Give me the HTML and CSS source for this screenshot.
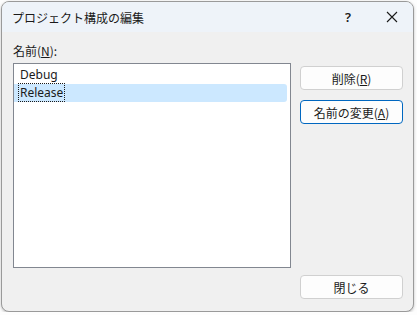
FILE: index.html
```html
<!DOCTYPE html>
<html lang="ja">
<head>
    <meta charset="UTF-8">
    <title>プロジェクト構成の編集</title>
    <link rel="stylesheet" href="styles.css">
</head>
<body>
    <div class="dialog">
        <div class="titlebar">
            <span class="title">プロジェクト構成の編集</span>
            <span class="help">?</span>
            <span class="close">
                <svg width="12" height="12" viewBox="0 0 12 12">
                    <path d="M1 1L11 11M11 1L1 11" stroke="#1a1a1a" stroke-width="1.1" fill="none"/>
                </svg>
            </span>
        </div>
        <div class="content">
            <div class="left">
                <div class="label">名前(<u>N</u>):</div>
                <div class="list">
                    <div class="item">Debug</div>
                    <div class="item selected"><span class="focus">Release</span></div>
                </div>
            </div>
            <div class="buttons">
                <button class="btn">削除(<u>R</u>)</button>
                <button class="btn default">名前の変更(<u>A</u>)</button>
                <div class="spacer"></div>
                <button class="btn">閉じる</button>
            </div>
        </div>
    </div>
</body>
</html>
```

FILE: styles.css
```css
body {
    margin: 0;
    padding: 1px 0 0 1px;
    background: #fdfdfd;
    font-family: "Noto Sans", "Noto Sans CJK JP", sans-serif;
    font-size: 12px;
    color: #1a1a1a;
}

.dialog {
    width: 411px;
    height: 309px;
    border: 1px solid #9a9a9a;
    border-radius: 8px;
    overflow: hidden;
    background: #f0f0f0;
    display: flex;
    flex-direction: column;
    box-shadow: 0 1px 3px rgba(0, 0, 0, 0.25);
}

.titlebar {
    height: 30px;
    background: #eef3f9;
    display: flex;
    align-items: center;
    padding-left: 10px;
}

.title {
    flex: 1;
    font-size: 12px;
    font-family: "Noto Sans CJK JP", sans-serif;
}

.help {
    width: 8px;
    font-size: 13px;
    font-weight: 600;
    margin-right: 18px;
}

.close {
    width: 42px;
    display: flex;
    justify-content: center;
}

.content {
    flex: 1;
    display: flex;
    padding: 11px 10px 12px 11px;
    gap: 9px;
}

.left {
    display: flex;
    flex-direction: column;
}

.label {
    height: 20px;
    font-family: "Noto Sans CJK JP", sans-serif;
    line-height: 16px;
}

.list {
    width: 276px;
    height: 201px;
    border: 1px solid #828790;
    background: #fff;
    padding-top: 2px;
}

.item {
    height: 18px;
    line-height: 18px;
    padding-left: 6px;
    margin-right: 3px;
}

.selected {
    background: #cce8ff;
    border-radius: 0 3px 3px 0;
}

.focus {
    outline: 1px dotted #1a1a1a;
    padding: 0 1px;
    margin-left: -1px;
}

.buttons {
    display: flex;
    flex-direction: column;
    padding-top: 23px;
    gap: 10px;
}

.spacer {
    flex: 1;
}

.btn {
    width: 103px;
    height: 24px;
    background: #fdfdfd;
    border: 1px solid #d0d0d0;
    border-radius: 4px;
    font-family: "Noto Sans CJK JP", sans-serif;
    font-size: 12px;
    color: #1a1a1a;
    padding: 0;
}

.btn.default {
    border: 1px solid #0067c0;
}
```
